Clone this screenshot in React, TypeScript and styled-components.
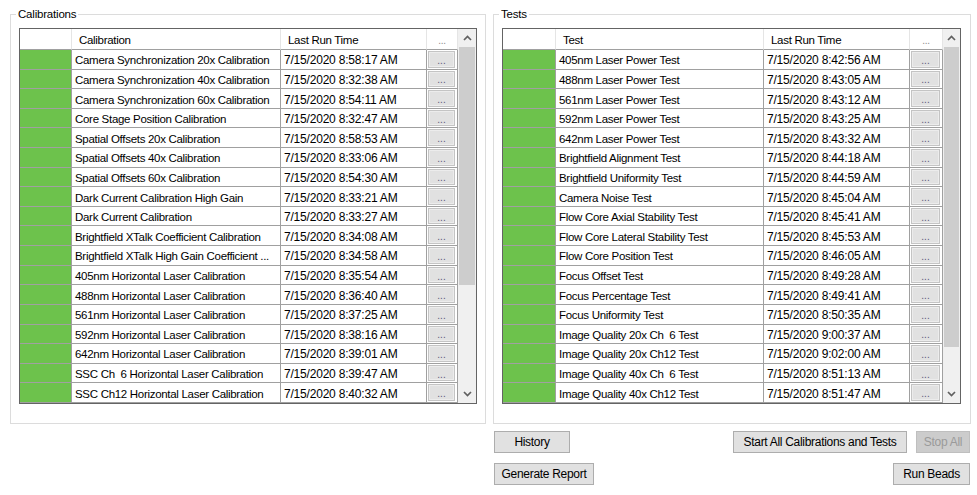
import React from "react";
import styled, { createGlobalStyle } from "styled-components";

const GlobalStyle = createGlobalStyle`
  html, body { margin: 0; padding: 0; background: #ffffff; }
  body { font-family: "Liberation Sans", Arial, sans-serif; font-size: 11.5px; color: #000; }
  * { box-sizing: border-box; }
`;

const Page = styled.div`
  display: grid;
  grid-template-columns: 476px 478px;
  column-gap: 7px;
  row-gap: 7px;
  padding: 7px 0 0 10px;
`;

const GroupBox = styled.fieldset<{ $pr: number }>`
  margin: 0;
  border: 1px solid #dcdcdc;
  padding: 6px ${(p) => p.$pr}px 19px 8px;
  min-width: 0;
`;

const Legend = styled.legend`
  font-size: 11.5px;
  line-height: 15px;
  padding: 0 2px;
  margin-left: -3px;
  letter-spacing: -0.2px;
`;

const GridFrame = styled.div<{ $w: number }>`
  width: ${(p) => p.$w}px;
  height: 376px;
  border: 1px solid #646464;
  display: flex;
  background: #fff;
  overflow: hidden;
`;

const Table = styled.div<{ $cols: string }>`
  flex: 1;
  display: grid;
  grid-template-columns: ${(p) => p.$cols};
  grid-template-rows: 21px repeat(18, 19.611px);
  align-content: start;
`;

const HeadCell = styled.div<{ $center?: boolean; $muted?: boolean; $time?: boolean }>`
  display: flex;
  align-items: center;
  justify-content: ${(p) => (p.$center ? "center" : "flex-start")};
  padding-left: ${(p) => (p.$center ? 0 : 7)}px;
  padding-top: 2px;
  border-right: 1px solid #e5e5e5;
  border-bottom: 1px solid #a0a0a0;
  color: ${(p) => (p.$muted ? "#8c8c8c" : "#000")};
  font-size: ${(p) => (p.$muted ? "10px" : p.$time ? "12px" : "11.5px")};
  letter-spacing: ${(p) => (p.$time ? "-0.2px" : "-0.3px")};
  white-space: pre;
  overflow: hidden;
`;

const StatusCell = styled.div`
  background: #6dc24c;
  border-right: 1px solid #a0a0a0;
  border-bottom: 1px solid #a0a0a0;
`;

const TextCell = styled.div<{ $time?: boolean }>`
  display: flex;
  align-items: center;
  padding: 2px 0 0 3px;
  font-size: ${(p) => (p.$time ? "12px" : "11.5px")};
  letter-spacing: ${(p) => (p.$time ? "-0.2px" : "-0.3px")};
  border-right: 1px solid #a0a0a0;
  border-bottom: 1px solid #a0a0a0;
  white-space: pre;
  overflow: hidden;
`;

const ButtonCell = styled.div`
  display: flex;
  padding: 1px 2px 1px 1px;
  border-right: 1px solid #a0a0a0;
  border-bottom: 1px solid #a0a0a0;
`;

const DotsButton = styled.div`
  flex: 1;
  display: flex;
  align-items: center;
  justify-content: center;
  background: #e1e1e1;
  border: 1px solid #c4c4c4;
  box-shadow: inset 0 0 0 1px #ececec;
  color: #5f5a78;
  font-size: 10px;
  line-height: 1;
  padding-top: 3px;
`;

const ScrollBar = styled.div<{ $w: number }>`
  width: ${(p) => p.$w}px;
  display: flex;
  flex-direction: column;
  background: #f0f0f0;
`;

const ArrowBox = styled.div`
  height: 18px;
  display: flex;
  align-items: center;
  justify-content: center;
  flex: none;
`;

const Track = styled.div`
  flex: 1;
  display: flex;
  flex-direction: column;
`;

const Thumb = styled.div<{ $h: number }>`
  height: ${(p) => p.$h}px;
  margin: 0 1px;
  background: #cdcdcd;
`;

const ButtonArea = styled.div`
  grid-column: 2;
  display: flex;
  flex-direction: column;
  gap: 10px;
  padding: 0 1px;
`;

const ButtonRow = styled.div`
  display: flex;
  justify-content: space-between;
`;

const ButtonGroup = styled.div`
  display: flex;
  gap: 9px;
`;

const Button = styled.button<{ $w: number; $disabled?: boolean }>`
  width: ${(p) => p.$w}px;
  height: 22px;
  padding: 0;
  margin: 0;
  font-family: "Liberation Sans", Arial, sans-serif;
  font-size: 12px;
  letter-spacing: -0.3px;
  background: ${(p) => (p.$disabled ? "#cccccc" : "#e1e1e1")};
  border: 1px solid ${(p) => (p.$disabled ? "#bfbfbf" : "#adadad")};
  color: ${(p) => (p.$disabled ? "#9a9a9a" : "#000")};
  border-radius: 0;
`;

const Chevron = ({ up }: { up?: boolean }) => (
  <svg width="9" height="6" viewBox="0 0 9 6">
    <polyline
      points={up ? "1,5 4.5,1.5 8,5" : "1,1 4.5,4.5 8,1"}
      fill="none"
      stroke="#606060"
      strokeWidth="1.7"
    />
  </svg>
);

type Row = [string, string];

const calibrations: Row[] = [
  ["Camera Synchronization 20x Calibration", "8:58:17"],
  ["Camera Synchronization 40x Calibration", "8:32:38"],
  ["Camera Synchronization 60x Calibration", "8:54:11"],
  ["Core Stage Position Calibration", "8:32:47"],
  ["Spatial Offsets 20x Calibration", "8:58:53"],
  ["Spatial Offsets 40x Calibration", "8:33:06"],
  ["Spatial Offsets 60x Calibration", "8:54:30"],
  ["Dark Current Calibration High Gain", "8:33:21"],
  ["Dark Current Calibration", "8:33:27"],
  ["Brightfield XTalk Coefficient Calibration", "8:34:08"],
  ["Brightfield XTalk High Gain Coefficient ...", "8:34:58"],
  ["405nm Horizontal Laser Calibration", "8:35:54"],
  ["488nm Horizontal Laser Calibration", "8:36:40"],
  ["561nm Horizontal Laser Calibration", "8:37:25"],
  ["592nm Horizontal Laser Calibration", "8:38:16"],
  ["642nm Horizontal Laser Calibration", "8:39:01"],
  ["SSC Ch  6 Horizontal Laser Calibration", "8:39:47"],
  ["SSC Ch12 Horizontal Laser Calibration", "8:40:32"],
];

const tests: Row[] = [
  ["405nm Laser Power Test", "8:42:56"],
  ["488nm Laser Power Test", "8:43:05"],
  ["561nm Laser Power Test", "8:43:12"],
  ["592nm Laser Power Test", "8:43:25"],
  ["642nm Laser Power Test", "8:43:32"],
  ["Brightfield Alignment Test", "8:44:18"],
  ["Brightfield Uniformity Test", "8:44:59"],
  ["Camera Noise Test", "8:45:04"],
  ["Flow Core Axial Stability Test", "8:45:41"],
  ["Flow Core Lateral Stability Test", "8:45:53"],
  ["Flow Core Position Test", "8:46:05"],
  ["Focus Offset Test", "8:49:28"],
  ["Focus Percentage Test", "8:49:41"],
  ["Focus Uniformity Test", "8:50:35"],
  ["Image Quality 20x Ch  6 Test", "9:00:37"],
  ["Image Quality 20x Ch12 Test", "9:02:00"],
  ["Image Quality 40x Ch  6 Test", "8:51:13"],
  ["Image Quality 40x Ch12 Test", "8:51:47"],
];

interface PanelProps {
  title: string;
  column: string;
  rows: Row[];
  cols: string;
  width: number;
  scrollW: number;
  thumb: number;
  pr: number;
}

const Panel = ({ title, column, rows, cols, width, scrollW, thumb, pr }: PanelProps) => (
  <GroupBox $pr={pr}>
    <Legend>{title}</Legend>
    <GridFrame $w={width}>
      <Table $cols={cols}>
        <HeadCell />
        <HeadCell>{column}</HeadCell>
        <HeadCell>Last Run Time</HeadCell>
        <HeadCell $center $muted>...</HeadCell>
        {rows.map(([name, time]) => (
          <React.Fragment key={name}>
            <StatusCell />
            <TextCell>{name}</TextCell>
            <TextCell $time>{`7/15/2020 ${time} AM`}</TextCell>
            <ButtonCell>
              <DotsButton>...</DotsButton>
            </ButtonCell>
          </React.Fragment>
        ))}
      </Table>
      <ScrollBar $w={scrollW}>
        <ArrowBox>
          <Chevron up />
        </ArrowBox>
        <Track>
          <Thumb $h={thumb} />
        </Track>
        <ArrowBox>
          <Chevron />
        </ArrowBox>
      </ScrollBar>
    </GridFrame>
  </GroupBox>
);

export default function App() {
  return (
    <>
      <GlobalStyle />
      <Page>
        <Panel
          title="Calibrations"
          column="Calibration"
          rows={calibrations}
          cols="52px 209px 146px 31px"
          width={458}
          scrollW={18}
          thumb={238}
          pr={8}
        />
        <Panel
          title="Tests"
          column="Test"
          rows={tests}
          cols="53px 208px 146px 33px"
          width={459}
          scrollW={17}
          thumb={300}
          pr={9}
        />
        <ButtonArea>
          <ButtonRow>
            <Button $w={76}>History</Button>
            <ButtonGroup>
              <Button $w={174}>Start All Calibrations and Tests</Button>
              <Button $w={54} $disabled>
                Stop All
              </Button>
            </ButtonGroup>
          </ButtonRow>
          <ButtonRow>
            <Button $w={100}>Generate Report</Button>
            <Button $w={77}>Run Beads</Button>
          </ButtonRow>
        </ButtonArea>
      </Page>
    </>
  );
}
